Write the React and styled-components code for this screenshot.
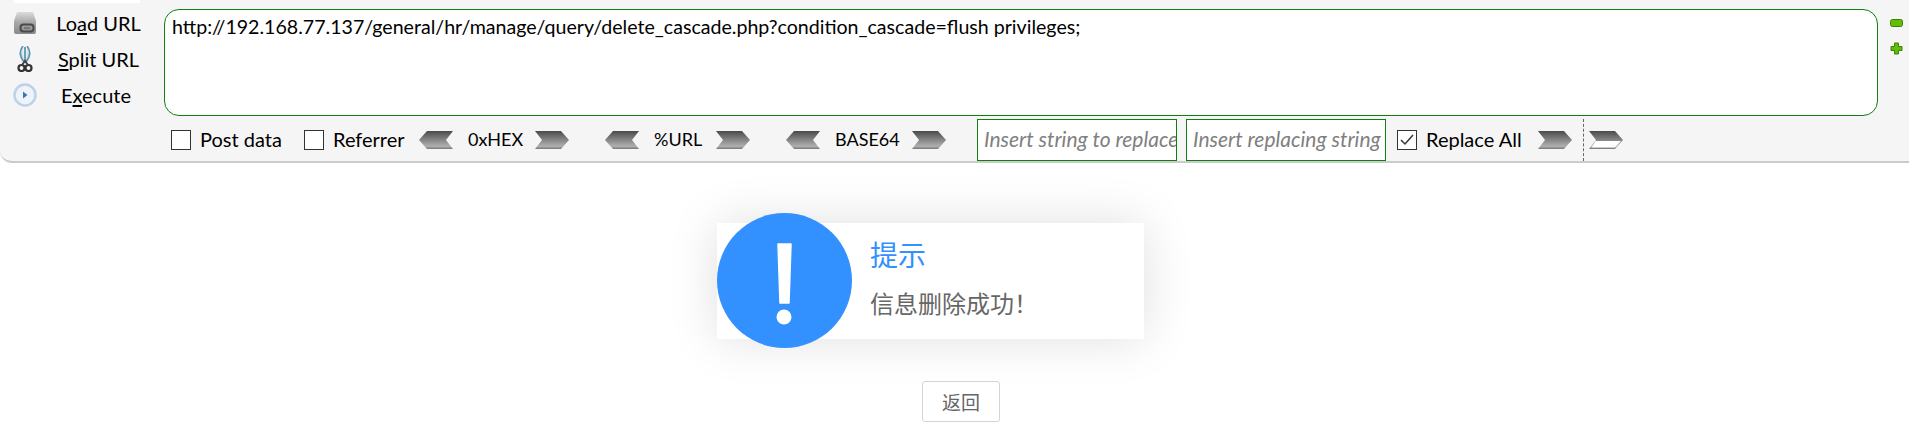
import React from 'react';
import styled, { createGlobalStyle } from 'styled-components';

const GlobalStyle = createGlobalStyle`
    html, body {
        margin: 0;
        padding: 0;
        background: #fff;
        overflow: hidden;
    }
    body {
        font-family: Lato, "Noto Sans CJK SC", sans-serif;
    }
`;

const Page = styled.div`
    width: 1909px;
    height: 447px;
    display: flex;
    flex-direction: column;
`;

const Toolbar = styled.div`
    height: 161px;
    display: flex;
    background: #f5f5f5;
    border-bottom: 2px solid #cbcbcb;
    border-bottom-left-radius: 12px;
    position: relative;
`;

const TopStrip = styled.div`
    position: absolute;
    left: 14px;
    top: 0;
    width: 126px;
    height: 3px;
    background: #fff;
`;

const Side = styled.div`
    width: 164px;
    flex-shrink: 0;
    padding: 11px 0 0 13px;
    box-sizing: border-box;
    display: flex;
    flex-direction: column;
    gap: 12px;
`;

const SideRow = styled.div`
    height: 24px;
    display: flex;
    align-items: center;
`;

const SideIcon = styled.svg`
    width: 24px;
    height: 26px;
    flex-shrink: 0;
`;

const SideLabel = styled.span`
    width: 123px;
    box-sizing: border-box;
    padding-right: ${(props) => props.$pad || 0}px;
    text-align: center;
    font-size: 20px;
    color: #000;
    white-space: nowrap;
    u {
        text-underline-offset: 2px;
    }
`;

const Main = styled.div`
    width: 1714px;
    padding-top: 9px;
    flex-shrink: 0;
`;

const UrlBox = styled.div`
    width: 1714px;
    height: 107px;
    box-sizing: border-box;
    background: #fff;
    border: 1px solid #0f7f0f;
    border-radius: 15px;
    padding: 5px 7px;
    font-size: 19.6px;
    line-height: 24px;
    color: #000;
`;

const Options = styled.div`
    display: flex;
    align-items: center;
    height: 42px;
    margin-top: 3px;
    padding-left: 7px;
    font-size: 20px;
    color: #000;
`;

const CheckBox = styled.span`
    width: 20px;
    height: 20px;
    box-sizing: border-box;
    border: 1px solid #333;
    background: #fff;
    flex-shrink: 0;
    display: flex;
    align-items: center;
    justify-content: center;
    margin-right: 9px;
`;

const OptionText = styled.span`
    white-space: nowrap;
    flex-shrink: 0;
    line-height: 24px;
    margin-top: -2px;
    width: ${(props) => props.$width}px;
    font-size: ${(props) => props.$size || 20}px;
`;

const Chevron = styled.svg`
    width: 34px;
    height: 20px;
    flex-shrink: 0;
    margin-right: ${(props) => props.$gap}px;
`;

const ReplaceInput = styled.div`
    width: 200px;
    height: 42px;
    box-sizing: border-box;
    border: 1px solid #0f7f0f;
    background: #fff;
    padding: 0 6px;
    font-size: 21px;
    font-style: italic;
    line-height: 38px;
    color: #808080;
    white-space: nowrap;
    overflow: hidden;
    flex-shrink: 0;
    margin-right: ${(props) => props.$gap}px;
`;

const Divider = styled.span`
    height: 42px;
    border-left: 1px dashed #666;
    margin-right: 5px;
`;

const Adjust = styled.div`
    display: flex;
    flex-direction: column;
    align-items: center;
    gap: 15px;
    padding: 19px 0 0 12px;
`;

const Content = styled.div`
    display: flex;
    flex-direction: column;
    align-items: flex-start;
    padding: 50px 0 0 717px;
`;

const Notice = styled.div`
    display: flex;
    align-items: center;
`;

const NoticeCircle = styled.svg`
    width: 135px;
    height: 135px;
    flex-shrink: 0;
    position: relative;
    z-index: 1;
`;

const NoticeCard = styled.div`
    width: 427px;
    height: 116px;
    margin-left: -135px;
    padding: 13px 0 0 153px;
    box-sizing: border-box;
    background: #fff;
    box-shadow: 0 0 50px rgba(0, 0, 0, 0.13);
    display: flex;
    flex-direction: column;
    gap: 14px;
    font-family: "Noto Sans CJK SC", sans-serif;
`;

const NoticeTitle = styled.div`
    font-size: 28px;
    line-height: 36px;
    color: #3390ff;
`;

const NoticeText = styled.div`
    font-size: 24px;
    line-height: 34px;
    color: #666;
`;

const BackButton = styled.button`
    width: 78px;
    height: 41px;
    margin: 33px 0 0 205px;
    background: #fff;
    border: 1px solid #d4d4d4;
    border-radius: 3px;
    font-family: "Noto Sans CJK SC", sans-serif;
    font-size: 19px;
    color: #666;
    padding: 0;
`;

const LoadIcon = () => (
    <SideIcon viewBox="0 0 24 26">
        <defs>
            <linearGradient id="loadTop" x1="0" y1="0" x2="0" y2="1">
                <stop offset="0" stopColor="#dcdcdc" />
                <stop offset=".5" stopColor="#a5a5a5" />
                <stop offset="1" stopColor="#8a8a8a" />
            </linearGradient>
        </defs>
        <path d="M4 2h16l3 9v11a2 2 0 0 1-2 2H3a2 2 0 0 1-2-2V11z" fill="url(#loadTop)" />
        <rect x="7.500" y="14.500" width="13" height="7" rx="3" fill="none" stroke="#4a4a4a" strokeWidth="2" />
        <rect x="11" y="17" width="6" height="2" fill="#777" />
    </SideIcon>
);

const SplitIcon = () => (
    <SideIcon viewBox="0 0 24 26">
        <path d="M10 0C6 5 7 11 11 16M14 0c4 5 3 11-1 16" fill="#cfe6f0" stroke="#5d93ad" strokeWidth="1.600" />
        <path d="M12 1v14" stroke="#4c7f9b" strokeWidth="1.500" />
        <circle cx="8.500" cy="22" r="3" fill="none" stroke="#333" strokeWidth="2.200" />
        <circle cx="15.500" cy="22" r="3" fill="none" stroke="#333" strokeWidth="2.200" />
        <path d="M9 19l3-4 3 4" fill="none" stroke="#444" strokeWidth="2" />
    </SideIcon>
);

const ExecuteIcon = () => (
    <SideIcon viewBox="0 0 24 26">
        <circle cx="12" cy="13" r="10.500" fill="#eef2f9" stroke="#bcd2ec" strokeWidth="2.500" />
        <path d="M10 9.500l4.500 3.500-4.500 3.500z" fill="#3c74bd" />
    </SideIcon>
);

const ArrowLeft = ({ gap }) => (
    <Chevron viewBox="0 0 34 20" $gap={gap}>
        <defs>
            <linearGradient id="chevron" x1="0" y1="0" x2="0" y2="1">
                <stop offset="0" stopColor="#4a4a4a" />
                <stop offset=".85" stopColor="#b0b0b0" />
                <stop offset="1" stopColor="#777" />
            </linearGradient>
        </defs>
        <path d="M8 1h26l-7 9 7 9H8l-8-9z" fill="url(#chevron)" />
    </Chevron>
);

const ArrowRight = ({ gap }) => (
    <Chevron viewBox="0 0 34 20" $gap={gap}>
        <path d="M0 1h26l8 9-8 9H0l7-9z" fill="url(#chevron)" />
    </Chevron>
);

const HollowArrow = () => (
    <Chevron viewBox="0 0 34 20" $gap={0}>
        <path d="M0 1h26l8 9-8 9H0l7-9z" fill="url(#chevron)" />
        <path d="M6.500 11h25.500l-6 6.500H2.500z" fill="#fff" />
    </Chevron>
);

const App = () => (
    <Page>
        <GlobalStyle />
        <Toolbar>
            <TopStrip />
            <Side>
                <SideRow>
                    <LoadIcon />
                    <SideLabel>Lo<u>a</u>d URL</SideLabel>
                </SideRow>
                <SideRow>
                    <SplitIcon />
                    <SideLabel><u>S</u>plit URL</SideLabel>
                </SideRow>
                <SideRow>
                    <ExecuteIcon />
                    <SideLabel $pad={5}>E<u>x</u>ecute</SideLabel>
                </SideRow>
            </Side>
            <Main>
                <UrlBox>http://192.168.77.137/general/hr/manage/query/delete_cascade.php?condition_cascade=flush privileges;</UrlBox>
                <Options>
                    <CheckBox />
                    <OptionText $width={104}>Post data</OptionText>
                    <CheckBox />
                    <OptionText $width={86}>Referrer</OptionText>
                    <ArrowLeft gap={15} />
                    <OptionText $width={67} $size={18}>0xHEX</OptionText>
                    <ArrowRight gap={36} />
                    <ArrowLeft gap={15} />
                    <OptionText $width={62} $size={18}>%URL</OptionText>
                    <ArrowRight gap={36} />
                    <ArrowLeft gap={15} />
                    <OptionText $width={77} $size={18}>BASE64</OptionText>
                    <ArrowRight gap={31} />
                    <ReplaceInput $gap={9}>Insert string to replace</ReplaceInput>
                    <ReplaceInput $gap={11}>Insert replacing string</ReplaceInput>
                    <CheckBox>
                        <svg width="14" height="12" viewBox="0 0 14 12">
                            <path d="M1 6l4 4 8-9" fill="none" stroke="#333" strokeWidth="1.500" />
                        </svg>
                    </CheckBox>
                    <OptionText $width={112}>Replace All</OptionText>
                    <ArrowRight gap={11} />
                    <Divider />
                    <HollowArrow />
                </Options>
            </Main>
            <Adjust>
                <svg width="13" height="8" viewBox="0 0 13 8">
                    <rect x="0.500" y="0.500" width="12" height="7" rx="2" fill="#5fbf00" stroke="#3f7d10" />
                </svg>
                <svg width="13" height="13" viewBox="0 0 13 13">
                    <path d="M4.500 1h4v3.500H12v4H8.500V12h-4V8.500H1v-4h3.500z" fill="#5fbf00" stroke="#3f7d10" />
                </svg>
            </Adjust>
        </Toolbar>
        <Content>
            <Notice>
                <NoticeCircle viewBox="0 0 135 135">
                    <circle cx="67.500" cy="67.500" r="67.500" fill="#3390ff" />
                    <path d="M61 31h13l-2 59h-9z" fill="#fff" stroke="#fff" strokeWidth="1.500" strokeLinejoin="round" />
                    <circle cx="67" cy="104" r="7.500" fill="#fff" />
                </NoticeCircle>
                <NoticeCard>
                    <NoticeTitle>提示</NoticeTitle>
                    <NoticeText>信息删除成功！</NoticeText>
                </NoticeCard>
            </Notice>
            <BackButton>返回</BackButton>
        </Content>
    </Page>
);

export default App;
